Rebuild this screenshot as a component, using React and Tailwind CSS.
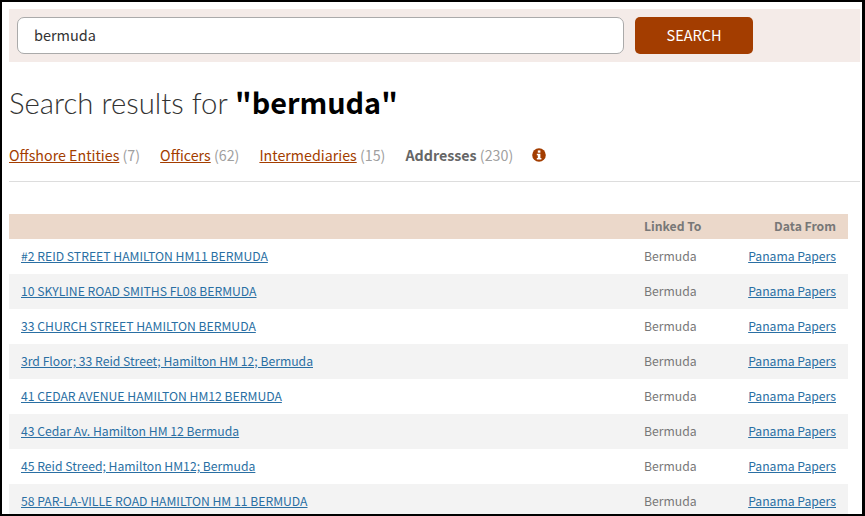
import React from 'react';

const rows = [
  '#2 REID STREET HAMILTON HM11 BERMUDA',
  '10 SKYLINE ROAD SMITHS FL08 BERMUDA',
  '33 CHURCH STREET HAMILTON BERMUDA',
  '3rd Floor; 33 Reid Street; Hamilton HM 12; Bermuda',
  '41 CEDAR AVENUE HAMILTON HM12 BERMUDA',
  '43 Cedar Av. Hamilton HM 12 Bermuda',
  '45 Reid Streed; Hamilton HM12; Bermuda',
  '58 PAR-LA-VILLE ROAD HAMILTON HM 11 BERMUDA',
];

const tabs = [
  { label: 'Offshore Entities', count: 7 },
  { label: 'Officers', count: 62 },
  { label: 'Intermediaries', count: 15 },
];

export default function App() {
  return (
    <div className="w-[865px] h-[516px] bg-black pt-[2px] pl-[2px] pr-[3px] pb-[2px]">
      <div className="h-full bg-white overflow-hidden pt-[7px] pl-[7px] pr-[2px] font-['Noto_Sans_CJK_SC','Open_Sans',sans-serif]">
        <div className="h-[53px] bg-[#f4ebe8] flex items-center pl-[8px] gap-[11px]">
          <div className="w-[607px] h-[37px] bg-white border border-[#aaaaaa] rounded-[7px] pl-[16px] pb-[2px] flex items-center text-[14.5px] text-[#333333]">
            bermuda
          </div>
          <button className="w-[118px] h-[37px] bg-[#a33d00] rounded-[5px] pb-[1px] text-white text-[14.5px]">SEARCH</button>
        </div>

        <h1 className="mt-[19px] h-[40px] text-[29.3px] leading-[40px] text-[#333333]">
          <span className="font-['Lato',sans-serif] font-light">Search results for </span>
          <span className="font-bold text-black text-[28.8px]">"bermuda"</span>
        </h1>

        <div className="mt-[22px] h-[24px] flex items-center text-[14.25px]">
          {tabs.map((t) => (
            <span key={t.label} className="mr-[20px] text-[#a0a0a0]">
              <a className="underline text-[#a33d00]">{t.label}</a> ({t.count})
            </span>
          ))}
          <span className="text-[#a0a0a0]">
            <b className="text-[#666666] font-bold">Addresses</b> (230)
          </span>
          <svg className="ml-[19px] w-[14px] h-[14px]" viewBox="0 0 14 14">
            <circle cx="7" cy="7" r="6.8" fill="#a33d00" />
            <rect x="5.8" y="2.4" width="2.6" height="2.3" fill="#fff" />
            <path d="M4.8 5.7h3.6v4.3h1v1.5H4.8V10h1V7.2h-1z" fill="#fff" />
          </svg>
        </div>

        <div className="mt-[14px] border-t border-[#dddddd]" />

        <div className="mt-[32px] w-[839px]">
          <div className="h-[25px] bg-[#ebd8ca] flex items-center text-[12.2px] font-bold text-[#777777]">
            <span className="ml-[635px] w-[90px]">Linked To</span>
            <span className="flex-1 text-right pr-[12px]">Data From</span>
          </div>
          {rows.map((r, i) => (
            <div key={r} className={`h-[35px] flex items-center text-[12.2px] ${i % 2 === 1 ? 'bg-[#f3f3f3]' : 'bg-white'}`}>
              <a className="ml-[12px] w-[623px] underline text-[#2a6fa3]">{r}</a>
              <span className="w-[90px] text-[#777777]">Bermuda</span>
              <a className="flex-1 text-right pr-[12px] underline text-[#2a6fa3]">Panama Papers</a>
            </div>
          ))}
        </div>
      </div>
    </div>
  );
}
